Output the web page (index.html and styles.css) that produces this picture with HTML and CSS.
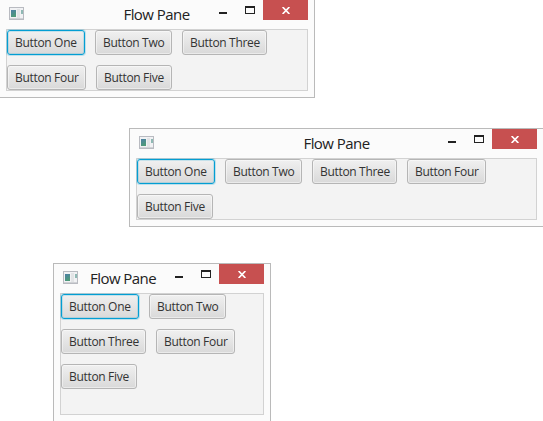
FILE: index.html
```
<!DOCTYPE html>
<html lang="en">
<head>
<meta charset="utf-8">
<title>Flow Pane</title>
<link rel="stylesheet" href="styles.css">
</head>
<body>
<svg width="0" height="0" class="defs">
  <defs>
    <linearGradient id="screen" x1="0" y1="0" x2="0.4" y2="1">
      <stop offset="0" stop-color="#4c7fa6"/><stop offset="1" stop-color="#4d9a78"/>
    </linearGradient>
    <symbol id="app" viewBox="0 0 15 13">
      <rect x="0.5" y="0.5" width="14" height="12" fill="#f1f2f4" stroke="#b9bbc1"/>
      <rect x="1" y="11" width="13" height="1" fill="#d0d2d6"/>
      <rect x="2" y="3" width="5" height="7" fill="url(#screen)"/>
      <rect x="8" y="2" width="3" height="9" fill="#e2e4e6"/>
      <rect x="12" y="3" width="2" height="4" fill="#8fb9b4"/>
    </symbol>
    <symbol id="min" viewBox="0 0 8 2"><path fill="#222" d="M0 0h8v2H0z"/></symbol>
    <symbol id="max" viewBox="0 0 10 8"><path fill="#222" fill-rule="evenodd" d="M0 0h10v8H0zM1 2v5h8V2z"/></symbol>
    <symbol id="close" viewBox="0 0 8 7"><path fill="none" stroke="#fff" stroke-width="1.7" d="M.6 0 7.4 7M7.4 0 .6 7"/></symbol>
  </defs>
</svg>
<main class="desktop">
  <section class="window wide">
    <header class="titlebar">
      <svg class="app"><use href="#app"/></svg>
      <h1>Flow Pane</h1>
      <div class="controls">
        <svg class="min"><use href="#min"/></svg>
        <svg class="max"><use href="#max"/></svg>
        <span class="close"><svg><use href="#close"/></svg></span>
      </div>
    </header>
    <div class="pane">
      <button class="one focused">Button One</button>
      <button class="two">Button Two</button>
      <button class="three">Button Three</button>
      <button class="four">Button Four</button>
      <button class="five">Button Five</button>
    </div>
  </section>
  <section class="window wider">
    <header class="titlebar">
      <svg class="app"><use href="#app"/></svg>
      <h1>Flow Pane</h1>
      <div class="controls">
        <svg class="min"><use href="#min"/></svg>
        <svg class="max"><use href="#max"/></svg>
        <span class="close"><svg><use href="#close"/></svg></span>
      </div>
    </header>
    <div class="pane">
      <button class="one focused">Button One</button>
      <button class="two">Button Two</button>
      <button class="three">Button Three</button>
      <button class="four">Button Four</button>
      <button class="five">Button Five</button>
    </div>
  </section>
  <section class="window narrow">
    <header class="titlebar">
      <svg class="app"><use href="#app"/></svg>
      <h1>Flow Pane</h1>
      <div class="controls">
        <svg class="min"><use href="#min"/></svg>
        <svg class="max"><use href="#max"/></svg>
        <span class="close"><svg><use href="#close"/></svg></span>
      </div>
    </header>
    <div class="pane">
      <button class="one focused">Button One</button>
      <button class="two">Button Two</button>
      <button class="three">Button Three</button>
      <button class="four">Button Four</button>
      <button class="five">Button Five</button>
    </div>
  </section>
</main>
</body>
</html>
```
FILE: styles.css
```
* { box-sizing: border-box; }
body { margin: 0; background: #fff; overflow: hidden; }
svg { display: block; }
.defs { position: absolute; }
.desktop { position: relative; width: 543px; height: 421px; overflow: hidden; }

.window {
  position: absolute;
  display: flex;
  flex-direction: column;
  padding: 0 6px 6px;
  background: #fbfbfb;
  border: 1px solid #bababa;
}
.wide { left: -1px; top: -1px; width: 316px; height: 99px; }
.wider { left: 129px; top: 128px; width: 415px; height: 99px; }
.narrow { left: 53px; top: 263px; width: 218px; height: 159px; }

.titlebar { display: flex; height: 29px; flex: none; }
.app { width: 15px; height: 13px; margin: 7px 0 0 3px; }
h1 {
  flex: 1;
  margin: 4px 0 0;
  font: 400 15px/20px "Open Sans", "Noto Sans", sans-serif;
  letter-spacing: -0.55px;
  color: #222;
  text-align: center;
  white-space: nowrap;
}
.wide h1 { padding-left: 70px; }
.wider h1 { padding-left: 71px; }
.narrow h1 { text-align: left; padding-left: 12px; }
.controls { display: flex; width: 89px; flex: none; }
.min { width: 8px; height: 2px; margin-top: 12px; }
.max { width: 10px; height: 8px; margin: 6px 8px 0 18px; }
.close {
  display: flex;
  width: 45px;
  height: 20px;
  padding: 7px 0 0 19px;
  background: #c75050;
}
.close svg { width: 8px; height: 7px; }

.pane {
  flex: 1;
  display: flex;
  flex-wrap: wrap;
  align-content: flex-start;
  gap: 10px;
  background: #f3f3f3;
  border: 1px solid #d2d2d2;
}
button {
  height: 25px;
  padding: 0 0 0 7px;
  border: 1px solid #b5b5b5;
  border-radius: 3px;
  background: linear-gradient(#f0f0f0, #d9d9d9);
  box-shadow: inset 0 0 0 1px rgba(255, 255, 255, .45);
  font: 400 12px/23px "Open Sans", "Noto Sans", sans-serif;
  letter-spacing: -0.32px;
  color: #333;
  text-align: left;
  white-space: nowrap;
}
.one { width: 78px; }
.two { width: 77px; }
.three { width: 85px; }
.four { width: 79px; }
.five { width: 76px; }
.focused {
  border-color: #039ed3;
  box-shadow: inset 0 0 0 1px rgba(3, 158, 211, .18), 0 0 0 1px rgba(3, 158, 211, .22);
}
```
